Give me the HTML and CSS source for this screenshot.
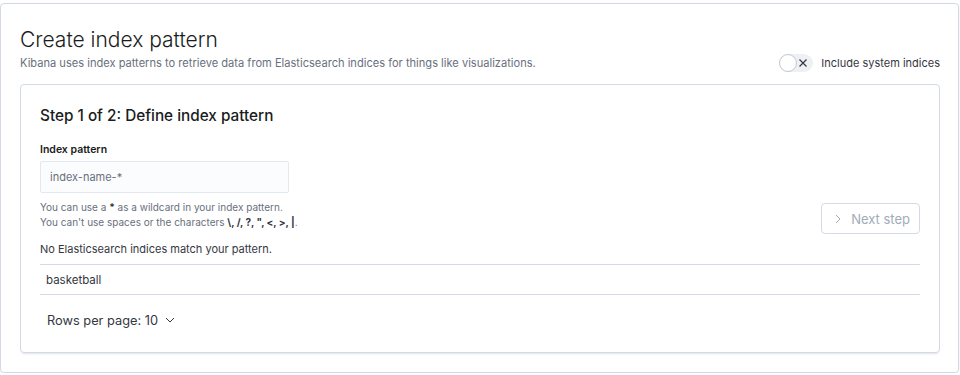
FILE: index.html
```html
<!DOCTYPE html>
<html lang="en">
<head>
    <meta charset="UTF-8">
    <meta name="viewport" content="width=device-width, initial-scale=1.0">
    <title>Create index pattern</title>
    <link rel="stylesheet" href="styles.css">
</head>
<body>
    <div class="page-panel">
        <div class="page-header">
            <div class="header-text">
                <h1>Create index pattern</h1>
                <p class="subtitle">Kibana uses index patterns to retrieve data from Elasticsearch indices for things like visualizations.</p>
            </div>
            <label class="switch">
                <span class="switch-track">
                    <span class="switch-thumb"></span>
                    <svg class="switch-icon" width="10" height="10" viewBox="0 0 10 10">
                        <path d="M1.5 1.5 L8.5 8.5 M8.5 1.5 L1.5 8.5" stroke="#343741" stroke-width="1.2" fill="none"/>
                    </svg>
                </span>
                <span class="switch-label">Include system indices</span>
            </label>
        </div>

        <div class="step-panel">
            <h2>Step 1 of 2: Define index pattern</h2>
            <div class="form-row">
                <div class="form-field">
                    <label for="pattern" class="field-label">Index pattern</label>
                    <input type="text" id="pattern" placeholder="index-name-*">
                    <div class="help">
                        <p>You can use a <b>*</b> as a wildcard in your index pattern.</p>
                        <p>You can't use spaces or the characters <b>\, /, ?, ", &lt;, &gt;, |</b>.</p>
                    </div>
                </div>
                <button class="next-btn" disabled>
                    <svg width="10" height="10" viewBox="0 0 10 10">
                        <path d="M3 1 L7 5 L3 9" stroke="#a2abba" stroke-width="1" fill="none"/>
                    </svg>
                    Next step
                </button>
            </div>
            <p class="no-match">No Elasticsearch indices match your pattern.</p>
            <table class="indices">
                <tr><td>basketball</td></tr>
            </table>
            <button class="rows-btn">
                Rows per page: 10
                <svg width="12" height="12" viewBox="0 0 12 12">
                    <path d="M2 4 L6 8 L10 4" stroke="#343741" stroke-width="1" fill="none"/>
                </svg>
            </button>
        </div>
    </div>
</body>
</html>
```

FILE: styles.css
```css
body {
    font-family: 'Inter', 'Liberation Sans', sans-serif;
    background-color: #ffffff;
    color: #343741;
    margin: 0;
    padding: 3px 1px 0 0;
}
.page-panel {
    height: 370px;
    border: 1px solid #d3dae6;
    border-radius: 4px;
    box-shadow: 0 1px 2px rgba(152, 162, 179, 0.25);
    padding: 21px 18px 0 19px;
    box-sizing: border-box;
}
.page-header {
    display: flex;
    justify-content: space-between;
    align-items: flex-end;
}
h1 {
    font-size: 21px;
    font-weight: 300;
    line-height: 30px;
    color: #1a1c21;
    margin: 0;
}
.subtitle {
    font-size: 11.1px;
    line-height: 16px;
    color: #69707d;
    margin: 0;
}
.switch {
    display: flex;
    align-items: center;
    gap: 8px;
    margin-bottom: -1px;
}
.switch-track {
    position: relative;
    display: flex;
    align-items: center;
    justify-content: flex-end;
    width: 34px;
    height: 18px;
    border-radius: 9px;
    background-color: #eef0f3;
    padding-right: 5px;
    box-sizing: border-box;
}
.switch-thumb {
    position: absolute;
    left: 0;
    top: 0;
    width: 18px;
    height: 18px;
    box-sizing: border-box;
    border-radius: 50%;
    background: #ffffff;
    border: 1px solid #c2c8d2;
}
.switch-label {
    font-size: 11px;
    color: #343741;
}
.step-panel {
    margin-top: 13px;
    border: 1px solid #d3dae6;
    border-radius: 4px;
    box-shadow: 0 2px 2px -1px rgba(152, 162, 179, 0.3);
    padding: 19px 19px 0 19px;
    height: 269px;
    box-sizing: border-box;
}
h2 {
    font-size: 15.3px;
    font-weight: 500;
    line-height: 24px;
    color: #1a1c21;
    margin: 0 0 13px;
}
.form-row {
    display: flex;
    justify-content: space-between;
    align-items: flex-end;
}
.field-label {
    display: block;
    font-size: 10.5px;
    font-weight: 600;
    line-height: 18px;
    color: #1a1c21;
    margin-bottom: 2px;
}
input {
    width: 249px;
    height: 32px;
    box-sizing: border-box;
    border: 1px solid #e3e8f0;
    border-radius: 2px;
    background-color: #fbfcfd;
    padding: 0 9px;
    font-family: inherit;
    font-size: 11px;
    color: #343741;
}
input::placeholder {
    color: #69707d;
}
.help {
    margin-top: 7px;
}
.help p {
    font-size: 10px;
    line-height: 15px;
    color: #69707d;
    margin: 0;
}
.help b {
    color: #343741;
}
.next-btn {
    display: flex;
    align-items: center;
    gap: 8px;
    height: 31px;
    padding: 0 9px 0 11px;
    background: #ffffff;
    border: 1px solid #d3dae6;
    border-radius: 4px;
    font-family: inherit;
    font-size: 13px;
    color: #a2abba;
    margin-bottom: -4px;
}
.no-match {
    font-size: 11px;
    line-height: 16px;
    color: #343741;
    margin: 11px 0 7px;
}
.indices {
    width: 100%;
    border-collapse: collapse;
}
.indices td {
    border-top: 1px solid #d3dae6;
    border-bottom: 1px solid #d3dae6;
    height: 29px;
    padding: 0 6px;
    font-size: 11.5px;
    color: #343741;
}
.rows-btn {
    display: flex;
    align-items: center;
    gap: 6px;
    margin-top: 15px;
    padding: 0 7px;
    height: 20px;
    background: none;
    border: none;
    font-family: inherit;
    font-size: 12.8px;
    color: #343741;
}
```
